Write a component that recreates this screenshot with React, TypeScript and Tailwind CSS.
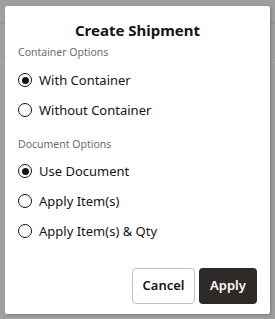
import { useState } from "react";

const containerOptions = ["With Container", "Without Container"];
const documentOptions = ["Use Document", "Apply Item(s)", "Apply Item(s) & Qty"];

function Radio({ label, checked, onSelect }: { label: string; checked: boolean; onSelect: () => void }) {
  return (
    <button onClick={onSelect} className="flex h-[30px] items-center gap-[7px] text-left">
      <span className="flex h-[14px] w-[14px] items-center justify-center rounded-full border-[1.5px] border-[#161513]">
        {checked && <span className="h-[7px] w-[7px] rounded-full bg-[#161513]" />}
      </span>
      <span className="text-[13px] leading-[18px] text-[#161513]">{label}</span>
    </button>
  );
}

export default function App() {
  const [container, setContainer] = useState(containerOptions[0]);
  const [doc, setDoc] = useState(documentOptions[0]);

  return (
    <div
      className="relative h-[319px] w-[275px] overflow-hidden bg-[#9f9f9f] px-[5px] pt-[6px]"
      style={{ fontFamily: '"Noto Sans", "Open Sans", sans-serif' }}
    >
      {/* dimmed page behind the dialog */}
      <div className="absolute left-0 right-0 top-[22px] h-[2px] bg-[#949494]" />
      <div className="absolute left-0 right-0 top-[62px] h-px bg-[#a9a9a9]" />

      <div className="relative flex h-[308px] w-[265px] flex-col rounded-[2px] bg-white px-[13px] pb-[10px] pt-[14px] shadow-[1px_1px_3px_rgba(0,0,0,0.25)]">
        <h1 className="text-center text-[15px] font-bold leading-[21px] text-[#161513]">Create Shipment</h1>

        <p className="mt-[4px] text-[10.5px] leading-[14px] text-[#6f6b68]">Container Options</p>
        <div className="mt-[6px] flex flex-col">
          {containerOptions.map((o) => (
            <Radio key={o} label={o} checked={container === o} onSelect={() => setContainer(o)} />
          ))}
        </div>

        <p className="mt-[12px] text-[10.5px] leading-[14px] text-[#6f6b68]">Document Options</p>
        <div className="mt-[5px] flex flex-col">
          {documentOptions.map((o) => (
            <Radio key={o} label={o} checked={doc === o} onSelect={() => setDoc(o)} />
          ))}
        </div>

        <div className="mt-auto flex justify-end gap-[4px]">
          <button className="h-[36px] w-[63px] rounded-[4px] border border-[#c4c2bf] bg-white text-[13px] font-semibold text-[#161513]">
            Cancel
          </button>
          <button className="h-[36px] w-[58px] rounded-[4px] bg-[#2e2a27] text-[13px] font-semibold text-white">
            Apply
          </button>
        </div>
      </div>
    </div>
  );
}
